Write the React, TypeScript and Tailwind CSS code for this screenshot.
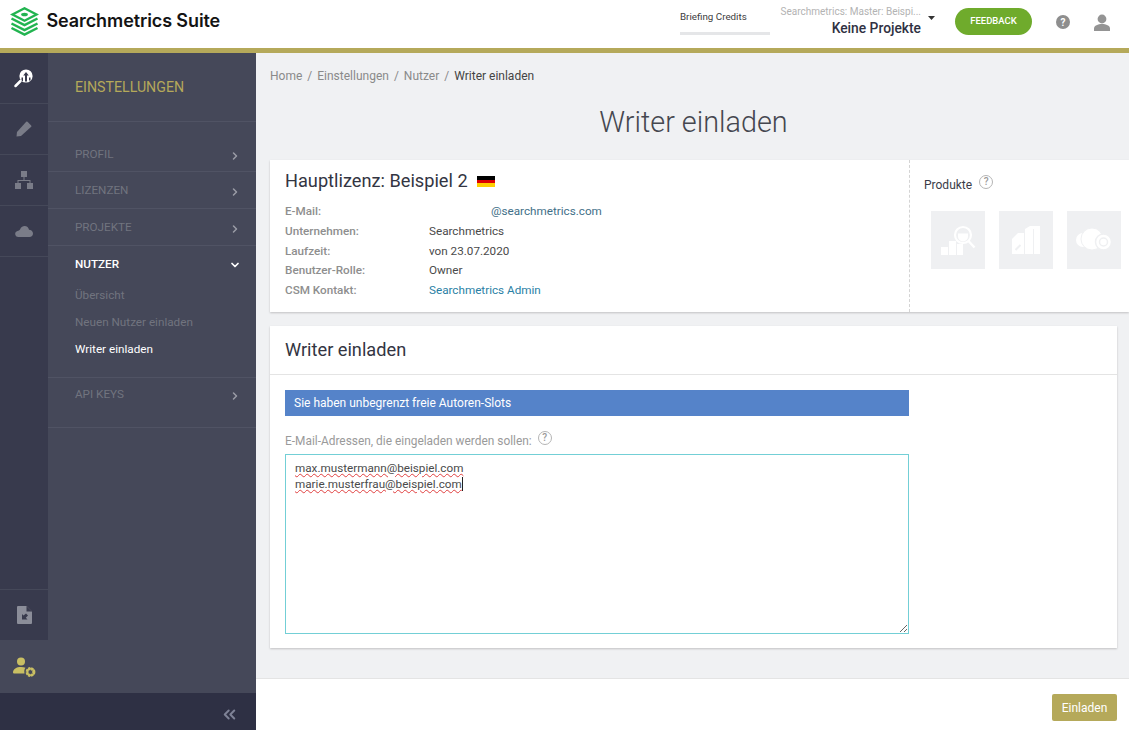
import React from "react";
import { ChevronRight, ChevronDown, ChevronsLeft } from "lucide-react";

const F = "font-['Roboto',sans-serif]";

function Help({ className = "" }: { className?: string }) {
  return (
    <span className={"inline-flex items-center justify-center rounded-full border-[1.5px] border-[#b5b5b5] text-[#9a9a9a] w-[14px] h-[14px] text-[10px] font-medium leading-none " + className}>?</span>
  );
}

function RailItem({ children }: { children: React.ReactNode }) {
  return <div className="h-[51px] shrink-0 flex items-center justify-center border-b border-[#454859]">{children}</div>;
}

function Logo() {
  return (
    <svg width="29" height="29" viewBox="0 0 29 29" fill="none">
      <path d="M14.500 1.300 L26.500 7.500 L14.500 13.700 L2.500 7.500 Z" stroke="#22b450" strokeWidth="2.400" fill="none" />
      <ellipse cx="14.500" cy="7.500" rx="3.400" ry="1.800" fill="#22b450" />
      <path d="M1.500 11.500 L14.500 18 L27.500 11.500" stroke="#22b450" strokeWidth="2.500" />
      <path d="M1.500 16.500 L14.500 23 L27.500 16.500" stroke="#22b450" strokeWidth="2.500" />
      <path d="M1.500 21 L14.500 27.500 L27.500 21" stroke="#22b450" strokeWidth="2.500" />
    </svg>
  );
}

function NavRow({ label, open, h = "h-[37px]", extra = "" }: { label: string; open?: boolean; h?: string; extra?: string }) {
  return (
    <div className={h + " flex items-center justify-between pl-[27px] pr-[15px] " + extra + " " + (open ? "" : "border-b border-[#505364]")}>
      <span className={"text-[11.700px] " + (open ? "text-white font-medium" : "text-[#71747f]")}>{label}</span>
      {open ? <ChevronDown size={12} strokeWidth={3.500} className="text-white" /> : <ChevronRight size={12} strokeWidth={3} className="text-[#9a9ca6] mt-[2px]" />}
    </div>
  );
}

function Row({ k, children }: { k: string; children: React.ReactNode }) {
  return (
    <div className="flex h-[19.750px] items-center text-[11.700px]">
      <div className="w-[144px] font-medium text-[#8e8e8e]">{k}</div>
      <div className="text-[#4a4a4a]">{children}</div>
    </div>
  );
}

function Tile({ children }: { children: React.ReactNode }) {
  return <div className="w-[54px] h-[58px] bg-[#eff0f2] flex items-center justify-center">{children}</div>;
}

function Sq({ children }: { children: string }) {
  return <span className="underline decoration-wavy decoration-[#e04040] decoration-1 underline-offset-1">{children}</span>;
}

export default function App() {
  return (
    <div className={F + " w-[1129px] h-[730px] overflow-hidden flex flex-col bg-[#f0f1f3]"}>
      <header className="h-[53px] shrink-0 bg-white border-b-[5px] border-[#b5a95a] flex items-start">
        <div className="pl-[9.500px] pt-[6.500px] flex items-center gap-[8px] w-[670px]">
          <Logo />
          <span className="font-['Inter',sans-serif] text-[18px] font-semibold text-[#141414] tracking-[-0.1px] -mt-[2px]">Searchmetrics Suite</span>
        </div>
        <div className="ml-[10px] w-[90px] flex flex-col h-full pt-[11px]">
          <span className="text-[9.800px] leading-[12px] text-[#3d3d3d] whitespace-nowrap">Briefing Credits</span>
          <div className="mt-[9px] h-[3px] bg-[#e5e6e8]" />
        </div>
        <div className="ml-[11px] w-[140px] h-full pt-[6px] flex flex-col items-end">
          <span className="text-[10px] leading-[11px] text-[#b3b3b3] whitespace-nowrap">Searchmetrics: Master: Beispi...</span>
          <span className="text-[13.800px] leading-[18px] mt-[2px] font-medium text-[#2f3142]">Keine Projekte</span>
        </div>
        <svg className="ml-[7px] mt-[16px]" width="7" height="4" viewBox="0 0 7 4"><path d="M0 0h7L3.500 4z" fill="#333" /></svg>
        <div className="ml-[20px] mt-[8px] w-[77px] h-[27px] rounded-full bg-[#6fab2c] flex items-center justify-center text-white text-[9.500px] font-medium">FEEDBACK</div>
        <div className="ml-[24px] mt-[15px] w-[14px] h-[14px] rounded-full bg-[#8e8e8e] text-white text-[10px] font-bold flex items-center justify-center">?</div>
        <svg className="ml-[23px] mt-[14px]" width="18" height="17" viewBox="0 0 18 17" fill="#949494"><circle cx="9" cy="5" r="4.400" /><path d="M1 17v-2.500C1 11.500 5 10 9 10s8 1.500 8 4.500V17z" /></svg>
      </header>

      <div className="flex-1 flex min-h-0">
        <aside className="w-[256px] shrink-0 flex flex-col bg-[#454859]">
          <div className="flex-1 flex min-h-0">
            <div className="w-[48px] shrink-0 bg-[#383a4d] flex flex-col">
              <RailItem>
                <svg width="22" height="22" viewBox="0 0 22 22" fill="none" className="-mt-[1px]">
                  <circle cx="13" cy="9" r="6.600" fill="#fff" />
                  <path d="M12 8.500h-1.800l2.800-3.500 2.800 3.500H14v6h-2z" fill="#383a4d" />
                  <path d="M8.500 10.500h1.500v3.500H8.500zM16 10.500h1.500v3H16z" fill="#383a4d" />
                  <path d="M7.500 14 L2.500 19" stroke="#fff" strokeWidth="2.500" strokeLinecap="round" />
                </svg>
              </RailItem>
              <RailItem>
                <svg width="16" height="16" viewBox="0 0 16 16" fill="#7a7c88"><path d="M11.500 .8l3.700 3.700a1 1 0 0 1 0 1.300L5 15 .5 15.500 1 11 10.200 .8a1 1 0 0 1 1.300 0z" /></svg>
              </RailItem>
              <RailItem>
                <svg width="20" height="19" viewBox="0 0 20 19" fill="#7a7c88"><rect x="7" y="0" width="6" height="6" /><rect x="1" y="12" width="6" height="6" /><rect x="13" y="12" width="6" height="6" /><path d="M9.500 6h1v3H16.500v3h-1v-2h-11v2h-1V9h6z" /></svg>
              </RailItem>
              <RailItem>
                <svg width="18" height="11" viewBox="0 0 18 11" fill="#7a7c88"><path d="M3 11a3 3 0 0 1-.6-5.900C3.500 4.500 4.500 4.500 5 3.500 6 .8 8 0 9.500 0c2.500 0 4 1.500 4.500 3.800 2 .2 4 1.500 4 3.700S16.500 11 14.500 11z" /></svg>
              </RailItem>
              <div className="flex-1" />
              <div className="h-[51px] flex items-center justify-center border-t border-[#454859]">
                <svg width="15" height="18" viewBox="0 0 15 18"><path d="M1 0h8.500L15 5.500V17a1 1 0 0 1-1 1H1a1 1 0 0 1-1-1V1a1 1 0 0 1 1-1z" fill="#8b8d99" /><path d="M9.500 0L15 5.500H9.500z" fill="#383a4d" /><path d="M5 8l1.500 1.500L9 7.500l2 2-2.200 2.200 1.700 1.800H5z" fill="#383a4d" /></svg>
              </div>
              <div className="h-[53px] bg-[#454859] flex items-center justify-center">
                <svg width="23" height="20" viewBox="0 0 23 20" fill="#c9bf63" className="-mr-[1px]"><circle cx="8" cy="4.500" r="4" /><path d="M0 15.500C0 12 3.500 10 8 10c1.800 0 3.300.3 4.500.8-1 1.300-1.500 3-1 5.700H1a1 1 0 0 1-1-1z" /><circle cx="17.500" cy="15" r="3.400" fill="none" stroke="#c9bf63" strokeWidth="3" strokeDasharray="2 .7" /><circle cx="17.500" cy="15" r="3.300" fill="none" stroke="#c9bf63" strokeWidth="1.600" /></svg>
              </div>
            </div>
            <div className="flex-1 flex flex-col">
              <div className="h-[69px] flex items-center pl-[27px] pt-[2px] border-b border-[#505364] text-[14.200px] text-[#b5a95a] shrink-0">EINSTELLUNGEN</div>
              <div className="mt-[13px]">
                <NavRow label="PROFIL" extra="pt-[3px]" />
                <NavRow label="LIZENZEN" extra="pt-[2px]" />
                <NavRow label="PROJEKTE" extra="pt-[2px]" />
                <NavRow label="NUTZER" open h="h-[38px]" />
                <div className="pl-[27px] text-[11.700px] pb-[14px] -mt-[2px] border-b border-[#505364] flex flex-col">
                  <span className="h-[27px] flex items-center text-[#71747f]">Übersicht</span>
                  <span className="h-[27px] flex items-center text-[#71747f]">Neuen Nutzer einladen</span>
                  <span className="h-[27px] flex items-center text-white">Writer einladen</span>
                </div>
                <NavRow label="API KEYS" h="h-[50px]" extra="pb-[16px]" />
              </div>
            </div>
          </div>
          <div className="h-[37px] shrink-0 bg-[#2e3044] flex items-center justify-end pr-[17px] pt-[5px]">
            <ChevronsLeft size={19} strokeWidth={2.500} className="text-[#7e8296]" />
          </div>
        </aside>

        <main className="flex-1 min-w-0 flex flex-col">
          <div className="flex-1 min-h-0 pl-[14px] pr-[12px]">
            <div className="pt-[14px] h-[44px] text-[12px] flex gap-[5px] text-[#8a8a8a]">
              <span>Home</span><span>/</span><span>Einstellungen</span><span>/</span><span>Nutzer</span><span>/</span><span className="text-[#444]">Writer einladen</span>
            </div>
            <h1 className="h-[63px] flex items-start justify-center pt-[3px] text-[28.800px] font-light leading-[44px] text-[#45474f]">Writer einladen</h1>

            <div className="mr-[-12px] h-[152px] bg-white shadow-[0_1px_2px_rgba(0,0,0,0.2)] flex">
              <div className="w-[640px] pl-[15px] pt-[9px] border-r border-dashed border-[#d4d4d4]">
                <div className="flex items-center gap-[9px] h-[24px] text-[18.200px] font-normal text-[#333542]">
                  <span>Hauptlizenz: Beispiel 2</span>
                  <div className="w-[18px] h-[11px] flex flex-col mt-[1px]">
                    <div className="flex-1 bg-black" /><div className="flex-1 bg-[#dd0000]" /><div className="flex-1 bg-[#ffce00]" />
                  </div>
                </div>
                <div className="mt-[9px]">
                  <Row k="E-Mail:"><span className="ml-[62px] text-[#3f6f88]">@searchmetrics.com</span></Row>
                  <Row k="Unternehmen:">Searchmetrics</Row>
                  <Row k="Laufzeit:">von 23.07.2020</Row>
                  <Row k="Benutzer-Rolle:">Owner</Row>
                  <Row k="CSM Kontakt:"><span className="text-[#2a7fa5]">Searchmetrics Admin</span></Row>
                </div>
              </div>
              <div className="flex-1 pl-[14px] pt-[15px]">
                <div className="flex items-start gap-[7px] text-[12px] text-[#3a3c48] h-[36px]">
                  <span className="mt-[1px]">Produkte</span><Help />
                </div>
                <div className="flex gap-[14px] pl-[7px]">
                  <Tile>
                    <svg width="36" height="30" viewBox="0 0 36 30" fill="#fff"><rect x="1" y="22" width="7" height="8" /><rect x="9" y="16" width="7" height="14" /><rect x="17" y="19" width="6" height="11" /><circle cx="23" cy="10" r="8" fill="none" stroke="#fff" strokeWidth="2.200" /><path d="M28.500 16l6 6.500" stroke="#fff" strokeWidth="2.400" /><path d="M18 8.500h10v3a5 5 0 0 1-10 0z" /></svg>
                  </Tile>
                  <Tile>
                    <svg width="28" height="28" viewBox="0 0 28 28" fill="#fff"><path d="M0 13l6-6h6v21H0z" /><path d="M13 3h8v25h-8z" /><rect x="22" y="0" width="6" height="28" /><path d="M13 3l5-3h4v3z" /><path d="M3.500 24l5-5" stroke="#eff0f2" strokeWidth="2" /></svg>
                  </Tile>
                  <Tile>
                    <svg width="36" height="24" viewBox="0 0 36 24" fill="#fff"><circle cx="7" cy="12" r="7" /><circle cx="16" cy="11" r="11" stroke="#eff0f2" strokeWidth="1" /><circle cx="27.500" cy="14" r="8" stroke="#eff0f2" strokeWidth="1.500" /><circle cx="27.500" cy="14" r="4" fill="none" stroke="#eff0f2" strokeWidth="1.500" /></svg>
                  </Tile>
                </div>
              </div>
            </div>

            <section className="mt-[14px] h-[322px] bg-white shadow-[0_1px_2px_rgba(0,0,0,0.2)]">
              <h2 className="h-[49px] pl-[15px] flex items-center text-[18.200px] font-normal text-[#333542] border-b border-[#e4e4e4]">Writer einladen</h2>
              <div className="pl-[15px] pt-[15px] w-[639px]">
                <div className="h-[26px] bg-[#5583c9] text-white text-[12px] pl-[9px] flex items-center">Sie haben unbegrenzt freie Autoren-Slots</div>
                <div className="mt-[15px] h-[23px] flex items-start gap-[6px] text-[11.900px] text-[#9a9a9a]">
                  <span className="mt-[2px]">E-Mail-Adressen, die eingeladen werden sollen:</span><Help />
                </div>
                <div className="resize overflow-auto h-[180px] border border-[#73cfd6] pl-[9px] pt-[5px] text-[11.700px] leading-[16px] text-[#4a4a4a]">
                  <div><Sq>max.mustermann@beispiel.com</Sq></div>
                  <div className="flex items-center"><Sq>marie.musterfrau@beispiel.com</Sq><span className="w-px h-[14px] bg-[#222]" /></div>
                </div>
              </div>
            </section>
          </div>
          <footer className="h-[52px] shrink-0 bg-white border-t border-[#e4e4e4] flex items-center justify-end pr-[12px] pt-[6px]">
            <div className="w-[65px] h-[27px] bg-[#b5a95a] rounded-[2px] text-white text-[12px] flex items-center justify-center">Einladen</div>
          </footer>
        </main>
      </div>
    </div>
  );
}
